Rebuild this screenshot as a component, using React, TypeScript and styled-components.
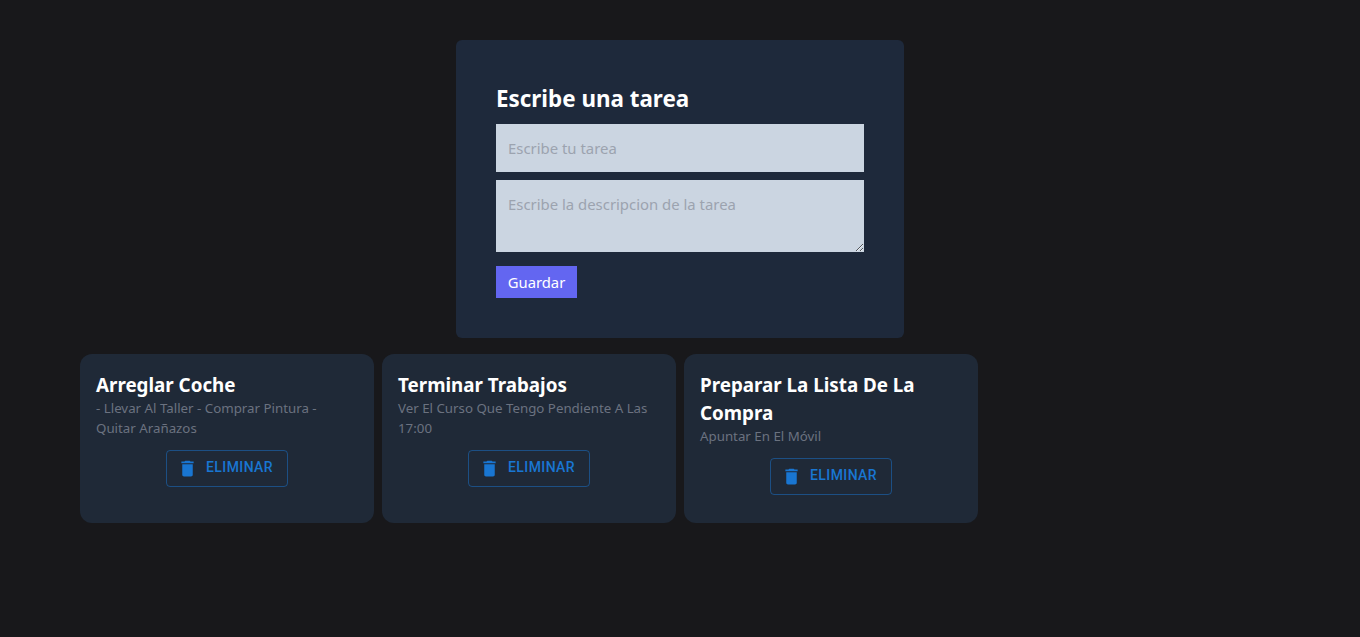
import React from "react";
import styled, { createGlobalStyle } from "styled-components";

const Global = createGlobalStyle`
  html, body { margin: 0; padding: 0; background: #18181b; }
  body { font-family: "Noto Sans", "Open Sans", sans-serif; }
  * { box-sizing: border-box; }
`;
const Page = styled.main`
  min-height: 637px;
  padding: 40px 80px 0;
  background: #18181b;
`;
const FormCard = styled.form`
  width: 448px;
  margin: 0 auto 16px;
  padding: 40px;
  background: #1e293b;
  border-radius: 6px;
  display: flex;
  flex-direction: column;
`;
const FormTitle = styled.h1`
  margin: 0 0 12px;
  font-size: 22.4px;
  line-height: 32px;
  font-weight: 700;
  color: #fff;
  position: relative;
  top: 2.5px;
`;
const TextInput = styled.input`
  width: 100%;
  height: 48px;
  padding: 12px;
  margin-bottom: 8px;
  border: 0;
  border-radius: 0;
  background: #cbd5e1;
  font: 400 14.9px/24px "Noto Sans", sans-serif;
  &::placeholder { color: #9ca3af; opacity: 1; }
`;
const TextArea = styled.textarea`
  width: 100%;
  height: 72px;
  padding: 12px;
  margin-bottom: 14px;
  border: 0;
  border-radius: 0;
  background: #cbd5e1;
  display: block;
  font: 400 14.9px/24px "Noto Sans", sans-serif;
  &::placeholder { color: #9ca3af; opacity: 1; }
`;
const SaveButton = styled.button`
  align-self: flex-start;
  width: 81px;
  height: 32px;
  padding: 0;
  border: 0;
  background: #6366f1;
  color: #fff;
  font: 400 14.8px/24px "Noto Sans", sans-serif;
`;
const Grid = styled.section`
  display: grid;
  grid-template-columns: repeat(4, 1fr);
  gap: 8px;
`;
const Card = styled.article`
  padding: 16px;
  background: #1f2937;
  border-radius: 12px;
`;
const CardTitle = styled.h2`
  margin: 0;
  font-size: 18.8px;
  line-height: 28px;
  font-weight: 700;
  color: #fff;
  position: relative;
  top: 1px;
`;
const CardText = styled.p`
  margin: 0;
  font-size: 13.3px;
  line-height: 20px;
  color: #6b7280;
`;
const Actions = styled.div`
  display: flex;
  justify-content: center;
  margin: 12px 0;
`;
const DeleteButton = styled.button`
  display: inline-flex;
  align-items: center;
  width: 122px;
  height: 37px;
  padding: 0 0 0 15px;
  background: transparent;
  border: 1px solid rgba(25, 118, 210, 0.5);
  border-radius: 4px;
  color: #1976d2;
  font: 500 14px/24px Roboto, sans-serif;
  letter-spacing: 0.4px;
  text-transform: uppercase;
`;
const DeleteLabel = styled.span`
  position: relative;
  top: -1.5px;
`;
const TrashIcon = styled.svg`
  flex: none;
  width: 21px;
  height: 21px;
  margin: 0 8px 0 -5px;
  fill: currentColor;
`;

const tasks = [
  { title: "Arreglar Coche", text: "- Llevar Al Taller - Comprar Pintura - Quitar Arañazos" },
  { title: "Terminar Trabajos", text: "Ver El Curso Que Tengo Pendiente A Las 17:00" },
  { title: "Preparar La Lista De La Compra", text: "Apuntar En El Móvil" },
];

export default function App() {
  return (
    <Page>
      <Global />
      <FormCard>
        <FormTitle>Escribe una tarea</FormTitle>
        <TextInput placeholder="Escribe tu tarea" />
        <TextArea placeholder="Escribe la descripcion de la tarea" />
        <SaveButton type="button">Guardar</SaveButton>
      </FormCard>
      <Grid>
        {tasks.map((t) => (
          <Card key={t.title}>
            <CardTitle>{t.title}</CardTitle>
            <CardText>{t.text}</CardText>
            <Actions>
              <DeleteButton type="button">
                <TrashIcon viewBox="0 0 24 24">
                  <path d="M6 19c0 1.1.9 2 2 2h8c1.1 0 2-.9 2-2V7H6v12zM19 4h-3.5l-1-1h-5l-1 1H5v2h14V4z" />
                </TrashIcon>
                <DeleteLabel>Eliminar</DeleteLabel>
              </DeleteButton>
            </Actions>
          </Card>
        ))}
      </Grid>
    </Page>
  );
}
